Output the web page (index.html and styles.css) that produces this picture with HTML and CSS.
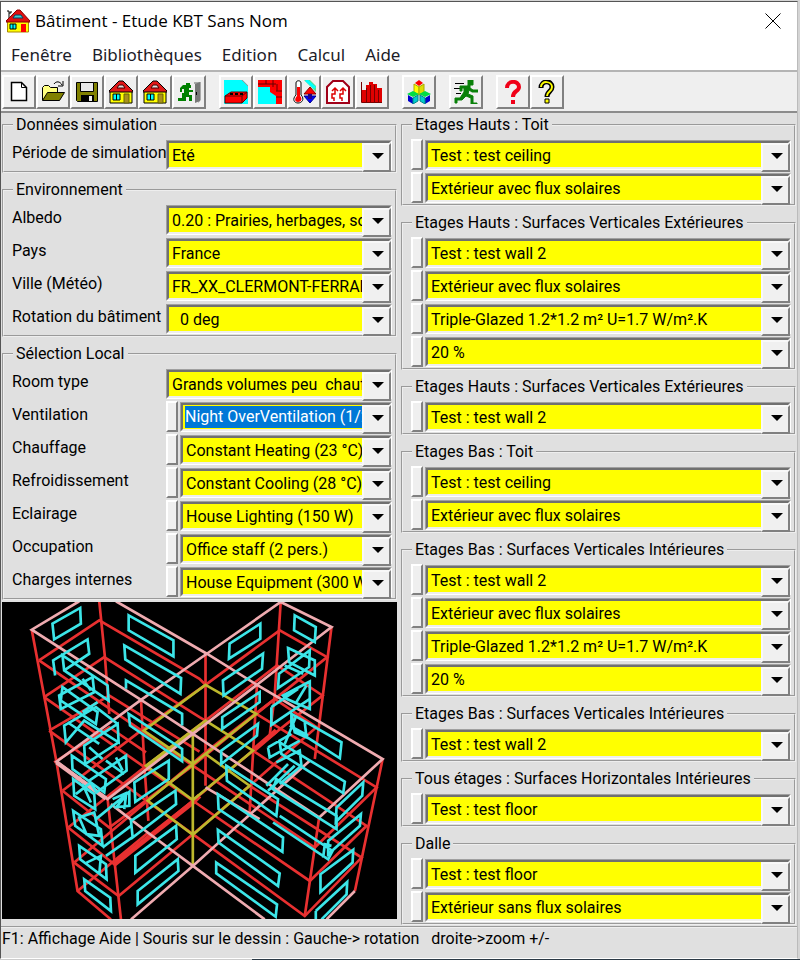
FILE: index.html
```html
<!DOCTYPE html>
<html lang="fr">
<head>
<meta charset="utf-8">
<meta name="viewport" content="width=device-width, initial-scale=1">
<title>Bâtiment - Etude KBT Sans Nom</title>
<link rel="stylesheet" href="styles.css">
</head>
<body>
<svg class="defs" aria-hidden="true">
  <symbol id="house" viewBox="0 0 24 24">
    <path d="M1 11h22v12H1z" fill="#ff0" stroke="#000"/>
    <path d="M0 11L10 1h4l10 10v1H0z" fill="#e01818" stroke="#000"/>
    <path d="M8 8l2-3h4l2 3z" fill="#ddd" stroke="#400"/>
    <path d="M4 14h7v6H4z" fill="#0ff" stroke="#000"/><path d="M7.500 14v6" stroke="#000"/>
    <path d="M15 14h5v9h-5z" fill="#a89020" stroke="#660"/>
  </symbol>
</svg>
<div class="window">
  <header class="titlebar">
    <svg class="app-icon" viewBox="0 0 24 24" aria-hidden="true">
      <path d="M1 2h2v2h2V2M3 4v6" fill="none" stroke="#000"/>
      <path d="M1.500 12h21v11h-21z" fill="#ff0" stroke="#a80"/>
      <path d="M0 12L11 1h3l10 11v1H0z" fill="#e01010" stroke="#800"/>
      <path d="M7 9l2-3h6l2 3z" fill="#4cc" stroke="#046"/>
      <path d="M4 15h6v5H4z" fill="#0ff" stroke="#000"/><path d="M7 15v5" stroke="#000"/>
      <path d="M15 15h5v8h-5z" fill="#f00"/>
    </svg>
    <h1>Bâtiment - Etude KBT Sans Nom</h1>
    <button class="close" aria-label="Fermer"><svg viewBox="0 0 16 16"><path d="M.5.500l15 15M15.500.5l-15 15" stroke="#000" fill="none"/></svg></button>
  </header>
  <nav class="menu">
    <a href="#">Fenêtre</a><a href="#">Bibliothèques</a><a href="#">Edition</a><a href="#">Calcul</a><a href="#">Aide</a>
  </nav>
  <div class="toolbar">
    <div class="tools">
      <button aria-label="Nouveau"><svg viewBox="0 0 24 24"><path d="M4.500 2.500h10l5 5v13h-15z" fill="#fff" stroke="#000" stroke-width="1.500"/><path d="M14.500 2.500v5h5" fill="none" stroke="#000"/></svg></button>
      <button aria-label="Ouvrir"><svg viewBox="0 0 24 24"><path d="M1.500 20V7.500l2-2h4l2 2h7V12" fill="#ffff80" stroke="#000"/><path d="M1.500 20.500l5-8h17l-5 8z" fill="#808000" stroke="#000"/><path d="M13 4c2-3 6-3 8 1m1-4v5h-5" fill="none" stroke="#000"/></svg></button>
      <button aria-label="Enregistrer"><svg viewBox="0 0 24 24"><path d="M1.500 2.500h21v19h-20l-1-1z" fill="#808000" stroke="#000"/><path d="M5.500 2.500h13v9h-13z" fill="#e8e8e8" stroke="#000"/><path d="M6 15h13v7H6z"/><path d="M14 16h3v5h-3z" fill="#eee"/></svg></button>
      <button aria-label="Bâtiment"><svg><use href="#house"/></svg></button>
      <button aria-label="Bâtiment type"><svg><use href="#house"/></svg></button>
      <button aria-label="Quitter"><svg viewBox="0 0 24 24"><path d="M17 2h7v18l-3 3V4h-4z" fill="#aaa"/><path d="M18 4l5-2v19l-5 2z" fill="#777"/><path d="M19 12h1v3h-1z"/><path d="M9 3h4v2h1v3h-2v2h4v2h-4v3h3v6h-3v-4H9v4H1v-3h4v-5h2v-4H5v3H3v-4l3-3h3z" fill="#008000"/></svg></button>
    </div>
    <div class="tools">
      <button aria-label="Matériaux"><svg viewBox="0 0 24 24"><path d="M0 0h19l5 5v19H0z" fill="#0ff"/><path d="M19 0l5 5V0z" fill="#efefef"/><path d="M18 0l6 6" stroke="#999"/><path d="M1 16l6-4h16v6l-5 5H1z" fill="#f00" stroke="#600"/><path d="M1 16h17v7m0-7l5-4" fill="none" stroke="#600"/><path d="M6 14h3m2 0h3m2 0h3" stroke="#000" stroke-width="2"/></svg></button>
      <button aria-label="Parois"><svg viewBox="0 0 24 24"><path d="M0 0h24v24H0z" fill="#0ff"/><path d="M0 0h24v24h-6v-8l-6-4V7H0z" fill="#f00"/><path d="M0 4h18M8 0v4M15 0v7m3 4h6m-6 6h6M19 4v7" fill="none" stroke="#600"/></svg></button>
      <button aria-label="Température"><svg viewBox="0 0 24 24"><path d="M12 0l12 12V6L18 0z" fill="#4fe08c"/><path d="M14 0l9 8" stroke="#0ff" stroke-width="3"/><path d="M4 3c0-3 5-3 5 0v12c4 4 1 8-3 8s-6-4-2-8z" fill="#fff" stroke="#000"/><path d="M5 7h3v9c3 3 1 6-2 6s-4-3-1-6z" fill="#f00"/><path d="M18 7l6 7H12z" fill="#f00" stroke="#800"/><path d="M12 16h12l-6 7z" fill="#00f" stroke="#008"/><path d="M16 14h4v5h-4z" fill="#208"/></svg></button>
      <button aria-label="Ventilation"><svg viewBox="0 0 24 24"><path d="M1 23V7l6-6h10l6 6v16z" fill="#fff" stroke="#a00018" stroke-width="2"/><path d="M8 21v-3H6v-4h3V8m-3 3l3-3 3 3m4 10v-3h-2v-4h3V8m-3 3l3-3 3 3" fill="none" stroke="#d00" stroke-width="1.500"/></svg></button>
      <button aria-label="Résultats"><svg viewBox="0 0 24 24"><path d="M2 10v12h20V8h-5V4h-4V2H9v3H6v5z" fill="#e00000"/><path d="M1.500 2v20.500H22M6.500 8v14m4-17v17m4-17v17m4-12v12" fill="none" stroke="#700"/></svg></button>
    </div>
    <div class="tools">
      <button aria-label="Zones"><svg viewBox="0 0 24 24"><path d="M8 3l4-3 4 3-4 3z" fill="#f00"/><path d="M7 4l5 3v8l-5-3z" fill="#ff0" stroke="#aa0"/><path d="M17 4l-5 3v8l5-3z" fill="#dd0" stroke="#aa0"/><path d="M0 14l6-3 6 3-6 3zM12 14l6-3 6 3-6 3z" fill="#0d4"/><path d="M1 15l5 3v6l-5-3zM23 15l-5 3v6l5-3z" fill="#00c"/><path d="M6 18l5-3v6l-5 3zM18 18l-5-3v6l5 3z" fill="#0cc" stroke="#088"/></svg></button>
    </div>
    <div class="tools">
      <button aria-label="Calculer"><svg viewBox="0 0 24 24"><path d="M1 3.500h9M0 8.500h7M2 13.500h5" stroke="#000"/><path d="M14 0h5v5h-3v3l3 2h5v2h-6l-3-2-1 4 5 2v7h4v1h-6v-6l-5-2-4 4H3v3H1v-5h5l4-6V8H8v3H6V6h7l2-1h-1z" fill="#088008" stroke="#088008"/></svg></button>
    </div>
    <div class="tools">
      <button aria-label="Aide"><svg viewBox="0 0 24 24"><path d="M6 8c0-8 12-8 12-1 0 5-6 3-6 10" fill="none" stroke="#f00018" stroke-width="4"/><path d="M10 20h4v4h-4z" fill="#f00018"/></svg></button>
      <button aria-label="Aide contextuelle"><svg viewBox="0 0 24 24"><path d="M6 8c0-8 11-8 11-1 0 5-5 4-5 10" fill="none" stroke="#000" stroke-width="5"/><path d="M6 7c0-7 11-6 11 0 0 5-5 4-5 9" fill="none" stroke="#ff0" stroke-width="2"/><path d="M10 19h4v4h-4z" fill="#ff0" stroke="#000"/></svg></button>
    </div>
  </div>
  <main class="panels">
    <div class="column">
      <fieldset>
        <legend>Données simulation</legend>
        <div class="row"><label for="periode">Période de simulation</label><span class="combo"><select id="periode"><option>Eté</option></select></span></div>
      </fieldset>
      <fieldset>
        <legend>Environnement</legend>
        <div class="row"><label for="albedo">Albedo</label><span class="combo"><select id="albedo"><option>0.20 : Prairies, herbages, sols</option></select></span></div>
        <div class="row"><label for="pays">Pays</label><span class="combo"><select id="pays"><option>France</option></select></span></div>
        <div class="row"><label for="ville">Ville (Météo)</label><span class="combo"><select id="ville"><option>FR_XX_CLERMONT-FERRAND</option></select></span></div>
        <div class="row"><label for="rotation">Rotation du bâtiment</label><span class="combo"><select id="rotation"><option>&nbsp; 0 deg</option></select></span></div>
      </fieldset>
      <fieldset>
        <legend>Sélection Local</legend>
        <div class="row"><label for="room">Room type</label><span class="combo"><select id="room"><option>Grands volumes peu&nbsp; chauffés</option></select></span></div>
        <div class="row"><label for="ventilation">Ventilation</label><button class="edit" aria-label="Modifier"></button><span class="combo"><select id="ventilation" class="selected"><option>Night OverVentilation (1/2)</option></select></span></div>
        <div class="row"><label for="chauffage">Chauffage</label><button class="edit" aria-label="Modifier"></button><span class="combo"><select id="chauffage"><option>Constant Heating (23 °C)</option></select></span></div>
        <div class="row"><label for="froid">Refroidissement</label><button class="edit" aria-label="Modifier"></button><span class="combo"><select id="froid"><option>Constant Cooling (28 °C)</option></select></span></div>
        <div class="row"><label for="eclairage">Eclairage</label><button class="edit" aria-label="Modifier"></button><span class="combo"><select id="eclairage"><option>House Lighting (150 W)</option></select></span></div>
        <div class="row"><label for="occupation">Occupation</label><button class="edit" aria-label="Modifier"></button><span class="combo"><select id="occupation"><option>Office staff (2 pers.)</option></select></span></div>
        <div class="row"><label for="charges">Charges internes</label><button class="edit" aria-label="Modifier"></button><span class="combo"><select id="charges"><option>House Equipment (300 W)</option></select></span></div>
      </fieldset>
      <div class="view">
        <svg viewBox="9 9 1182 951" preserveAspectRatio="xMidYMid slice" role="img" aria-label="Vue filaire du bâtiment">
          <g fill="none" stroke-width="8">
            <g stroke="#e83030">
              <path d="M98 93L172 488 235 875 335 960M300 8L317 175 330 345M325 600L365 960M425 303L435 500 447 665M618 165V560M843 10L825 290 810 410M995 85L945 480M772 258L750 640M1148 480L1065 875M958 655L915 950"/>
              <path d="M120 185L300 65 600 240 618 258M135 295L315 175 600 355 618 365M150 395L330 290 600 458M165 490L330 385 440 460"/>
              <path d="M120 185L580 500 945 745 1130 565 770 345M135 295L580 605 930 845 1100 680 760 455M150 395L580 705 915 950 1085 775 750 560"/>
              <path d="M190 575L330 685 580 500 770 345 982 175 840 95 618 258 425 395 190 575"/>
              <path d="M207 685L345 795 580 605 760 455 968 290 832 200 618 365 435 505 207 685"/>
              <path d="M225 790L358 890 580 705 750 560 950 385 825 300 618 460 445 605 225 790M235 875L447 700"/>
              <path d="M345 795L580 610 600 590M760 455L830 395" stroke-width="15"/>
            </g>
            <g stroke="#bdb82c">
              <path d="M618 258L770 345 580 495 433 395ZM618 365L760 455 580 603 440 500ZM618 465L750 560 580 707 445 605ZM580 405V800"/>
              <path d="M440 505L600 385" stroke-width="14"/>
            </g>
            <g stroke="#efabb0" stroke-width="8">
              <path d="M240 8L98 93 425 303 580 405 958 655 1148 480 772 258 622 165 350 8M843 10L995 85 772 258 580 405 325 600 172 488 425 303 622 165 843 10"/>
              <path d="M335 615L445 700 580 800 795 960M395 960L580 800 930 485M618 565L780 660M980 960L1065 875"/>
              <path d="M172 490L320 598" stroke-width="13"/>
            </g>
            <g stroke="#3ce5e8">
              <path d="M160 75L243 28 245 75 165 122ZM388 50L522 125 522 173 388 95ZM375 140L545 238 543 285 378 182ZM380 270V245L548 345V380M388 345L548 450V487L392 380Z"/>
              <path d="M168 230L162 185 265 122 270 165 195 215M190 170L325 260 328 305 195 215ZM180 290L280 235 285 280 185 330ZM190 265L295 340 290 375 185 305ZM195 380L290 325 355 375 358 430 255 365 200 430ZM205 370L300 435M255 440L355 375 358 430 258 495ZM270 445L310 480M250 340L295 310M250 240L275 275"/>
              <path d="M218 470L320 540 315 580 220 510ZM270 545L380 470 382 515 292 580ZM320 485L375 525M350 475L370 515M222 540L285 585 288 630 225 590ZM230 585L275 550M250 555L275 610M290 660L390 578 390 620 345 625M340 600L385 580M350 625L380 590 375 630"/>
              <path d="M222 635L305 690 310 740 228 680ZM240 655L285 640 300 710 262 705ZM240 740L320 795 322 840 243 780ZM262 790L305 770 300 825M255 840L333 895 335 935 258 875ZM405 550L508 485 508 540 408 608ZM395 665L528 575 530 615 400 715ZM408 770L530 680 532 720 408 820ZM415 875L535 780 537 815 415 915ZM310 745L395 680M320 770L405 710"/>
            </g>
            <g stroke="#3ce5e8" transform="translate(600)">
              <path d="M285 50L348 85 345 130 283 95ZM90 135L182 75 182 120 88 180ZM70 245L190 165 187 210 72 290ZM180 280L68 355V390L180 310ZM175 375L65 455V495L172 410Z"/>
              <path d="M265 148L345 185V230L268 190ZM238 225L330 155 328 205 235 268ZM255 200L310 225M250 290L330 248V330L260 300ZM290 310L320 260M215 325L295 270M215 325V378L330 300M275 345L425 430 420 478 275 385ZM275 345L285 400 320 415 315 370M270 380L325 410M255 435L290 350"/>
              <path d="M240 430L435 548 430 582 245 465ZM205 445L275 405M205 445L210 475 300 425M230 490L300 455 305 500 240 555M205 575L285 500M200 560L265 495M230 540L410 650V690L220 570Z"/>
              <path d="M410 625L490 550 487 590 408 668ZM385 725L483 645 480 680 385 765ZM362 825L460 752 458 790 362 878ZM348 935L442 848 440 885 365 960M348 935V960M80 500L235 600 230 650 82 545ZM55 585L250 715 248 758 57 630ZM55 692L240 822 235 860 57 730ZM50 790L232 915 228 952 50 822ZM220 670L385 780 398 755 240 650M370 775L375 735 395 740"/>
            </g>
          </g>
        </svg>
      </div>
    </div>
    <div class="column">
      <fieldset>
        <legend>Etages Hauts : Toit</legend>
        <div class="row"><button class="edit" aria-label="Modifier"></button><span class="combo"><select aria-label="Composition"><option>Test : test ceiling</option></select></span></div>
        <div class="row"><button class="edit" aria-label="Modifier"></button><span class="combo"><select aria-label="Exposition"><option>Extérieur avec flux solaires</option></select></span></div>
      </fieldset>
      <fieldset>
        <legend>Etages Hauts : Surfaces Verticales Extérieures</legend>
        <div class="row"><button class="edit" aria-label="Modifier"></button><span class="combo"><select aria-label="Composition"><option>Test : test wall 2</option></select></span></div>
        <div class="row"><button class="edit" aria-label="Modifier"></button><span class="combo"><select aria-label="Exposition"><option>Extérieur avec flux solaires</option></select></span></div>
        <div class="row"><button class="edit" aria-label="Modifier"></button><span class="combo"><select aria-label="Vitrage"><option>Triple-Glazed 1.2*1.2 m² U=1.7 W/m².K</option></select></span></div>
        <div class="row"><button class="edit" aria-label="Modifier"></button><span class="combo"><select aria-label="Taux de vitrage"><option>20 %</option></select></span></div>
      </fieldset>
      <fieldset>
        <legend>Etages Hauts : Surfaces Verticales Extérieures</legend>
        <div class="row"><button class="edit" aria-label="Modifier"></button><span class="combo"><select aria-label="Composition"><option>Test : test wall 2</option></select></span></div>
      </fieldset>
      <fieldset>
        <legend>Etages Bas : Toit</legend>
        <div class="row"><button class="edit" aria-label="Modifier"></button><span class="combo"><select aria-label="Composition"><option>Test : test ceiling</option></select></span></div>
        <div class="row"><button class="edit" aria-label="Modifier"></button><span class="combo"><select aria-label="Exposition"><option>Extérieur avec flux solaires</option></select></span></div>
      </fieldset>
      <fieldset>
        <legend>Etages Bas : Surfaces Verticales Intérieures</legend>
        <div class="row"><button class="edit" aria-label="Modifier"></button><span class="combo"><select aria-label="Composition"><option>Test : test wall 2</option></select></span></div>
        <div class="row"><button class="edit" aria-label="Modifier"></button><span class="combo"><select aria-label="Exposition"><option>Extérieur avec flux solaires</option></select></span></div>
        <div class="row"><button class="edit" aria-label="Modifier"></button><span class="combo"><select aria-label="Vitrage"><option>Triple-Glazed 1.2*1.2 m² U=1.7 W/m².K</option></select></span></div>
        <div class="row"><button class="edit" aria-label="Modifier"></button><span class="combo"><select aria-label="Taux de vitrage"><option>20 %</option></select></span></div>
      </fieldset>
      <fieldset>
        <legend>Etages Bas : Surfaces Verticales Intérieures</legend>
        <div class="row"><button class="edit" aria-label="Modifier"></button><span class="combo"><select aria-label="Composition"><option>Test : test wall 2</option></select></span></div>
      </fieldset>
      <fieldset>
        <legend>Tous étages : Surfaces Horizontales Intérieures</legend>
        <div class="row"><button class="edit" aria-label="Modifier"></button><span class="combo"><select aria-label="Composition"><option>Test : test floor</option></select></span></div>
      </fieldset>
      <fieldset>
        <legend>Dalle</legend>
        <div class="row"><button class="edit" aria-label="Modifier"></button><span class="combo"><select aria-label="Composition"><option>Test : test floor</option></select></span></div>
        <div class="row"><button class="edit" aria-label="Modifier"></button><span class="combo"><select aria-label="Exposition"><option>Extérieur sans flux solaires</option></select></span></div>
      </fieldset>
    </div>
  </main>
  <footer class="status">F1: Affichage Aide | Souris sur le dessin : Gauche-&gt; rotation &nbsp; droite-&gt;zoom +/-</footer>
</div>
</body>
</html>
```
FILE: styles.css
```css
* { box-sizing: border-box; }

body {
  margin: 0;
  min-height: 100vh;
  display: flex;
  padding: 1px 2px 2px 0;
  background: linear-gradient(90deg, #ccc 252px, #2c3a46 252px) bottom / 100% 2px no-repeat, #d4d4d4;
  color: #000;
  font: 16px/20px Roboto, "Liberation Sans", sans-serif;
}

button, select { font: inherit; color: inherit; }
.defs { position: absolute; width: 0; height: 0; }

.window {
  flex: 1;
  min-width: 0;
  display: flex;
  flex-direction: column;
  background: #e0e0e0;
  border: 1px solid #555;
  border-bottom-color: #fff;
  border-right-color: #bbb;
}

.titlebar {
  display: flex;
  align-items: center;
  height: 38px;
  padding: 0 16px 0 5px;
  gap: 5px;
  background: #fff;
}
.titlebar h1 {
  flex: 1;
  margin: 0;
  font: 17px/24px "Open Sans", "Noto Sans", sans-serif;
}
.app-icon { width: 24px; height: 24px; }
.close { padding: 0; border: 0; background: none; width: 16px; height: 16px; }
.close svg { display: block; }

.menu {
  display: flex;
  gap: 20px;
  height: 30px;
  padding: 3px 10px 0;
  background: #fff;
}
.menu a {
  color: #1c1c28;
  text-decoration: none;
  font: 17px/24px "Noto Sans", "Open Sans", sans-serif;
}

.toolbar {
  display: flex;
  gap: 13px;
  height: 43px;
  padding: 3px 1px;
  background: #efefef;
  border-top: 2px solid #b4b4b4;
  border-bottom: 2px solid #8c8c8c;
}
.tools { display: flex; }
.tools button {
  display: flex;
  align-items: center;
  justify-content: center;
  width: 34px;
  height: 34px;
  padding: 0;
  background: #efefef;
  border: 2px solid;
  border-color: #fff #808080 #808080 #fff;
}
.tools svg { width: 24px; height: 24px; }

.panels {
  flex: 1;
  display: grid;
  grid-template-columns: 1fr 1fr;
  gap: 4px;
  padding: 2px 1px 1px;
}
.column {
  display: flex;
  flex-direction: column;
  gap: 7px;
  min-width: 0;
}

fieldset {
  min-width: 0;
  margin: 0;
  padding: 3px 3px 0 8px;
  border: 2px groove #eee;
}
legend { margin-left: 1px; padding: 0 3px; line-height: 20px; }

.row {
  display: flex;
  align-items: center;
  gap: 2px;
  height: 33px;
}
.row label {
  flex: 0 0 152px;
  min-width: 0;
  padding-bottom: 4px;
  white-space: nowrap;
}
.edit {
  width: 12px;
  height: 31px;
  padding: 0;
  background: #efefef;
  border: 2px solid;
  border-color: #fff #808080 #808080 #fff;
}
.combo {
  position: relative;
  flex: 1;
  min-width: 0;
  height: 30px;
  border: 1px solid;
  border-color: #a0a0a0 #fff #fff #a0a0a0;
}
.combo select {
  appearance: none;
  display: block;
  width: 100%;
  height: 28px;
  padding: 2px 25px 0 3px;
  border: 2px solid;
  border-color: #707070 #eee #eee #707070;
  border-radius: 0;
  background: #ff0;
}
.combo select.selected {
  color: #fff;
  padding: 1px 25px 1px 2px;
  background: linear-gradient(#0078d7, #0078d7) content-box, #ff0;
}
.combo::before {
  content: "";
  position: absolute;
  top: 2px;
  right: 0;
  width: 25px;
  height: 25px;
  background: #f0f0f0;
  border: 2px solid;
  border-color: #f8f8f8 #808080 #808080 #f8f8f8;
  pointer-events: none;
}
.combo::after {
  content: "";
  position: absolute;
  top: 12px;
  right: 7px;
  border: 6px solid transparent;
  border-top-color: #000;
  border-bottom: 0;
  pointer-events: none;
}

.view {
  flex: 1;
  min-height: 200px;
  position: relative;
  margin: -5px 0 6px;
  background: #000;
}
.view svg { position: absolute; inset: 0; width: 100%; height: 100%; }

.status {
  height: 32px;
  padding: 1px 1px;
  border-top: 2px groove #eee;
  line-height: 20px;
}
```
